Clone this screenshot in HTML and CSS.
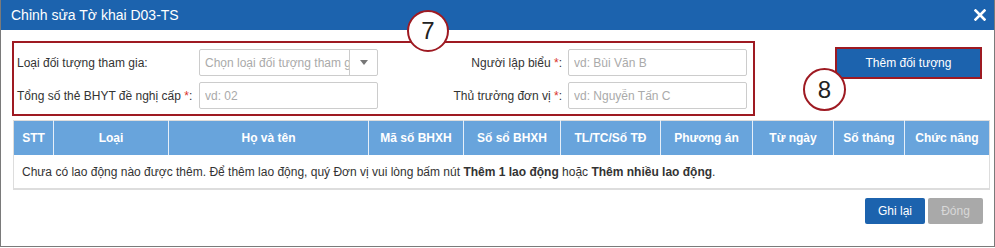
FILE: index.html
```html
<!DOCTYPE html>
<html lang="vi">
<head>
    <meta charset="UTF-8">
    <meta name="viewport" content="width=device-width, initial-scale=1.0">
    <title>Chỉnh sửa Tờ khai D03-TS</title>
    <link rel="stylesheet" href="styles.css">
</head>
<body>

<div class="dialog">
    <div class="dialog-header">
        <span class="dialog-title">Chỉnh sửa Tờ khai D03-TS</span>
        <span class="close-btn">
            <svg width="12" height="12" viewBox="0 0 12 12">
                <path d="M1.5 1.5 L10.5 10.5 M10.5 1.5 L1.5 10.5" stroke="#fff" stroke-width="2.6" stroke-linecap="square"/>
            </svg>
        </span>
    </div>

    <div class="dialog-body">
        <div class="top-row">
            <!-- Thông tin tờ khai -->
            <div class="form-box">
                <label class="lbl">Loại đối tượng tham gia:</label>
                <div class="select-box">
                    <span class="select-text">Chọn loại đối tượng tham gia</span>
                    <span class="select-arrow"></span>
                </div>
                <label class="lbl lbl-right">Người lập biểu <span class="req">*</span>:</label>
                <input type="text" class="txt" placeholder="vd: Bùi Văn B">

                <label class="lbl">Tổng số thẻ BHYT đề nghị cấp <span class="req">*</span>:</label>
                <input type="text" class="txt" placeholder="vd: 02">
                <label class="lbl lbl-right">Thủ trưởng đơn vị <span class="req">*</span>:</label>
                <input type="text" class="txt" placeholder="vd: Nguyễn Tấn C">
            </div>

            <div class="add-wrap">
                <button type="button" class="btn btn-primary btn-add">Thêm đối tượng</button>
            </div>
        </div>

        <!-- Danh sách lao động -->
        <table class="grid">
            <thead>
                <tr>
                    <th class="c-stt">STT</th>
                    <th class="c-loai">Loại</th>
                    <th class="c-ten">Họ và tên</th>
                    <th class="c-ma">Mã số BHXH</th>
                    <th class="c-so">Số sổ BHXH</th>
                    <th class="c-tl">TL/TC/Số TĐ</th>
                    <th class="c-pa">Phương án</th>
                    <th class="c-tu">Từ ngày</th>
                    <th class="c-thang">Số tháng</th>
                    <th class="c-cn">Chức năng</th>
                </tr>
            </thead>
            <tbody>
                <tr>
                    <td colspan="10" class="empty">Chưa có lao động nào được thêm. Để thêm lao động, quý Đơn vị vui lòng bấm nút <b>Thêm 1 lao động</b> hoặc <b>Thêm nhiều lao động</b>.</td>
                </tr>
            </tbody>
        </table>

        <div class="footer">
            <button type="button" class="btn btn-primary btn-save">Ghi lại</button>
            <button type="button" class="btn btn-disabled btn-close">Đóng</button>
        </div>
    </div>

    <!-- Chú thích -->
    <div class="marker marker-7">7</div>
    <div class="marker marker-8">8</div>
</div>

</body>
</html>
```

FILE: styles.css
```css
body {
    margin: 0;
    padding: 0;
    font-family: 'Liberation Sans', Arial, sans-serif;
    font-size: 12px;
    color: #333;
    background-color: #fff;
}

.dialog {
    position: relative;
    width: 995px;
    height: 247px;
    box-sizing: border-box;
    border: 1px solid #7a7a7a;
    border-top: none;
    background-color: #fff;
}

.dialog-header {
    height: 30px;
    background-color: #1c63ae;
    display: flex;
    align-items: center;
    justify-content: space-between;
    padding: 0 8px 0 10px;
}

.dialog-title {
    color: #fff;
    font-size: 14px;
}

.close-btn {
    display: flex;
    margin-top: -1px;
}

.dialog-body {
    padding: 11px 12px 0 11px;
}

.top-row {
    display: flex;
    align-items: flex-start;
}

.form-box {
    display: grid;
    grid-template-columns: 176px 179px 1fr 179px;
    column-gap: 6px;
    row-gap: 6px;
    width: 743px;
    box-sizing: border-box;
    border: 2px solid #9e1a22;
    padding: 6px 6px 5px 3px;
    align-items: center;
}

.lbl {
    white-space: nowrap;
    color: #333;
}

.lbl-right {
    text-align: right;
}

.req {
    color: #d9342b;
}

.txt, .select-box {
    height: 27px;
    box-sizing: border-box;
    border: 1px solid #ccc;
    border-radius: 2px;
    font-family: 'Liberation Sans', Arial, sans-serif;
    font-size: 12px;
    padding: 0 5px;
    margin: 0;
    width: 100%;
}

.txt::placeholder {
    color: #aaa;
}

.select-box {
    display: flex;
    align-items: center;
    padding: 0;
    overflow: hidden;
}

.select-text {
    flex: 1;
    min-width: 0;
    padding-left: 5px;
    color: #aaa;
    white-space: nowrap;
    overflow: hidden;
}

.select-arrow {
    flex: none;
    width: 27px;
    height: 100%;
    border-left: 1px solid #ccc;
    display: flex;
    align-items: center;
    justify-content: center;
}

.select-arrow::after {
    content: "";
    border-left: 4px solid transparent;
    border-right: 4px solid transparent;
    border-top: 5px solid #777;
}

.add-wrap {
    margin-left: auto;
    margin-top: 6px;
    border: 2px solid #9e1a22;
}

.btn {
    font-family: 'Liberation Sans', Arial, sans-serif;
    font-size: 12px;
    border: none;
    border-radius: 2px;
    cursor: pointer;
    padding: 0;
}

.btn-primary {
    background-color: #1c63ae;
    color: #fff;
}

.btn-disabled {
    background-color: #a9a9a9;
    color: #d8d8d8;
}

.btn-add {
    display: block;
    width: 143px;
    height: 28px;
    border-radius: 0;
}

.grid {
    margin-top: 4px;
    margin-left: 1px;
    width: 969px;
    border-collapse: collapse;
    table-layout: fixed;
    border: 1px solid #ddd;
    border-bottom-width: 2px;
}

.grid th {
    height: 34px;
    padding: 0;
    background-color: #68a4dc;
    color: #fff;
    font-weight: bold;
    text-align: center;
    border-left: 1px solid #e6eff9;
    white-space: nowrap;
}

.grid th:first-child {
    border-left: none;
}

.c-stt { width: 39px; }
.c-loai { width: 114px; }
.c-ten { width: 199px; }
.c-ma { width: 94px; }
.c-so { width: 96px; }
.c-tl { width: 99px; }
.c-pa { width: 91px; }
.c-tu { width: 80px; }
.c-thang { width: 70px; }
.c-cn { width: 84px; }

.grid .empty {
    height: 33px;
    padding: 0 8px;
    color: #333;
}

.footer {
    display: flex;
    justify-content: flex-end;
    gap: 3px;
    margin-top: 8px;
    margin-right: -1px;
}

.btn-save {
    width: 60px;
    height: 26px;
}

.btn-close {
    width: 55px;
    height: 26px;
}

.marker {
    position: absolute;
    box-sizing: border-box;
    border: 2px solid #9e1a22;
    border-radius: 50%;
    background-color: #fff;
    display: flex;
    align-items: center;
    justify-content: center;
    font-size: 24px;
    color: #222;
}

.marker-7 {
    left: 406px;
    top: 10px;
    width: 42px;
    height: 42px;
}

.marker-8 {
    left: 802px;
    top: 68px;
    width: 43px;
    height: 43px;
}
```
